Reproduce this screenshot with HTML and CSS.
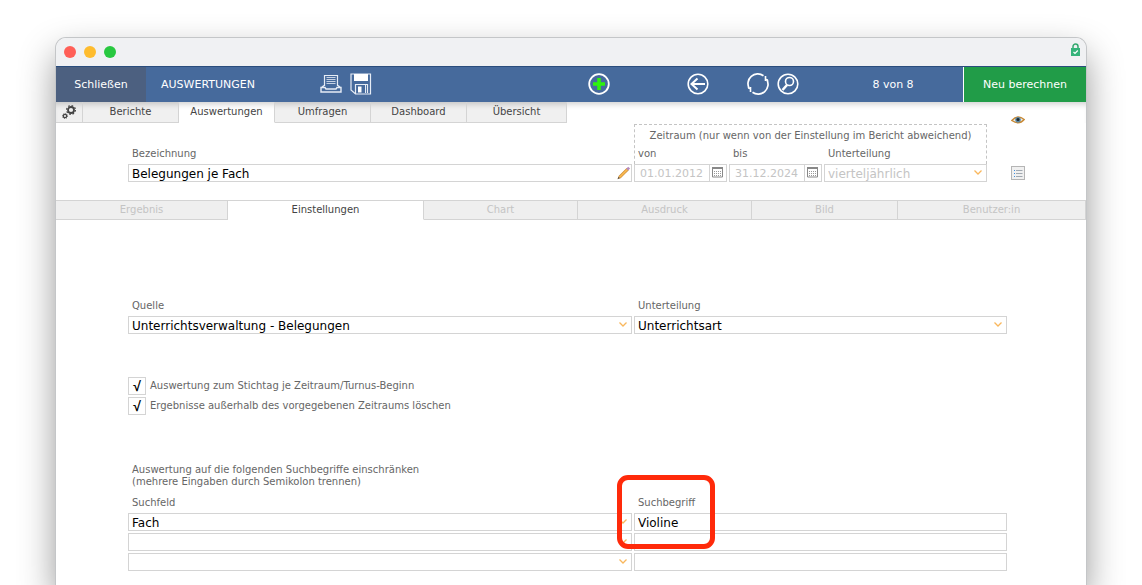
FILE: index.html
```html
<!DOCTYPE html>
<html lang="de">
<head>
  <meta charset="UTF-8">
  <meta name="viewport" content="width=device-width, initial-scale=1.0">
  <title>Auswertungen</title>
  <link rel="stylesheet" href="styles.css">
</head>
<body>
  <div class="window">
    <header class="titlebar">
      <span class="dot red"></span>
      <span class="dot yellow"></span>
      <span class="dot green"></span>
      <svg class="lock" width="9" height="13" viewBox="0 0 9 13">
        <path d="M2 6V3.500a2.500 2.500 0 0 1 5 0V6" fill="none" stroke="#35a86f" stroke-width="1.500"/>
        <rect y="5" width="9" height="8" fill="#35b37a"/>
        <path d="M2.500 9l1.500 1.500L6.800 7.500" fill="none" stroke="#fff" stroke-width="1.200"/>
      </svg>
    </header>

    <div class="toolbar">
      <button type="button" class="close">Schließen</button>
      <h1>AUSWERTUNGEN</h1>
      <div class="tools">
        <button type="button" aria-label="Drucken">
          <svg width="22" height="22" viewBox="0 0 22 22" fill="none" stroke="#e6ecf5">
            <path d="M4.500 13V2.500h13V13" stroke-width="1.200"/>
            <path d="M6.500 4.500h9M6.500 6.500h9M6.500 8.500h9M6.500 10.500h9" stroke-width=".8"/>
            <path d="M4 12.500L1.500 14.500M18 12.500l2.500 2M1 14.500h4l1 1.500h10l1-1.500h4v4.500H1z" stroke-width="1.400"/>
          </svg>
        </button>
        <button type="button" aria-label="Speichern">
          <svg width="22" height="22" viewBox="0 0 22 22" fill="none" stroke="#e6ecf5">
            <path d="M1 1h19.500v20H5.500L1 17z" stroke-width="1.200"/>
            <path d="M4 1h14v7H4z" fill="#fff" stroke="none"/>
            <path d="M5.500 21V11.500h12V20" stroke-width="1.200"/>
            <path d="M8 13.500h3.500v6H8z" fill="#fff" stroke="none"/>
            <path d="M15.500 12v8" stroke-width="1"/>
          </svg>
        </button>
      </div>
      <div class="tools">
        <button type="button" aria-label="Neu">
          <svg width="22" height="22" viewBox="0 0 22 22">
            <circle cx="11" cy="11" r="9.800" fill="none" stroke="#fff" stroke-width="1.800"/>
            <path d="M9.200 5h3.600v4.200H17v3.600h-4.200V17H9.200v-4.200H5V9.200h4.200z" fill="#2df20c"/>
          </svg>
        </button>
      </div>
      <div class="tools">
        <button type="button" aria-label="Zurück">
          <svg width="22" height="22" viewBox="0 0 22 22" fill="none" stroke="#fff">
            <circle cx="11" cy="11" r="9.800" stroke-width="1.600"/>
            <path d="M18 11H5M10.500 5.500L4.500 11l6 5.500" stroke-width="2"/>
          </svg>
        </button>
      </div>
      <div class="tools">
        <button type="button" aria-label="Aktualisieren">
          <svg width="22" height="22" viewBox="0 0 22 22" fill="none" stroke="#fff" stroke-width="1.700">
            <path d="M16.500 2.800A9.800 9.800 0 0 0 2.200 15.500M5.500 19.200A9.800 9.800 0 0 0 19.800 6.500"/>
            <path d="M3.500 19v-5M18.500 3v5" stroke-width="1.600"/>
            <path d="M.8 14.500L3.500 16M21.200 7.500L18.500 6" stroke-width="1.200"/>
          </svg>
        </button>
        <button type="button" aria-label="Suchen">
          <svg width="22" height="22" viewBox="0 0 22 22" fill="none" stroke="#fff">
            <circle cx="11" cy="11" r="9.800" stroke-width="1.600"/>
            <circle cx="12.500" cy="8.500" r="4" stroke-width="1.600"/>
            <path d="M10 12l-4.500 5" stroke-width="2.600"/>
          </svg>
        </button>
      </div>
      <span class="count">8 von 8</span>
      <button type="button" class="recalc">Neu berechnen</button>
    </div>

    <nav class="tabs">
      <a href="#" class="gear" aria-label="Optionen">
        <svg width="14" height="14" viewBox="0 0 14 14" fill="none" stroke="#444">
          <circle cx="9" cy="5" r="3" stroke-width="1.800"/>
          <circle cx="9" cy="5" r="4.400" stroke-width="1.200" stroke-dasharray="1.700 1.755"/>
          <circle cx="3" cy="11" r="1.700" stroke-width="1.300"/>
          <circle cx="3" cy="11" r="2.600" stroke-width=".8" stroke-dasharray="1 1.040"/>
        </svg>
      </a>
      <a href="#">Berichte</a>
      <a href="#" class="active">Auswertungen</a>
      <a href="#">Umfragen</a>
      <a href="#">Dashboard</a>
      <a href="#">Übersicht</a>
    </nav>

    <section class="head">
      <div class="name">
        <label for="bezeichnung">Bezeichnung</label>
        <div class="edit-field">
          <input type="text" id="bezeichnung" value="Belegungen je Fach">
          <svg width="14" height="14" viewBox="0 0 14 14">
            <path d="M2.500 11.500L11 3" stroke="#c98a35" stroke-width="3"/>
            <path d="M2.500 11.500L11 3" stroke="#f9b850" stroke-width="1.800"/>
            <path d="M10.500 3.500L12.500 1.500" stroke="#b58abf" stroke-width="2.800"/>
            <path d="M.5 13.500l1-2.800L3.300 12.500z" fill="#6b5230"/>
          </svg>
        </div>
      </div>
      <div class="period">
        <div class="period-box">
          <p>Zeitraum (nur wenn von der Einstellung im Bericht abweichend)</p>
          <div class="period-grid">
            <label for="von">von</label>
            <label for="bis">bis</label>
            <label for="teilung">Unterteilung</label>
          </div>
        </div>
        <div class="period-grid">
          <div class="date">
            <input type="text" id="von" value="01.01.2012" disabled>
            <button type="button" aria-label="Kalender von">
              <svg width="11" height="11" viewBox="0 0 11 11"><path d="M.5 .5h10v9.500H.5z" fill="#fff" stroke="#888"/><path d="M0 1h11" stroke="#888" stroke-width="2"/><path d="M2 4.500h8M2 6.500h8M2 8.500h8" stroke="#999" stroke-dasharray="1 1"/></svg>
            </button>
          </div>
          <div class="date">
            <input type="text" id="bis" value="31.12.2024" disabled>
            <button type="button" aria-label="Kalender bis">
              <svg width="11" height="11" viewBox="0 0 11 11"><path d="M.5 .5h10v9.500H.5z" fill="#fff" stroke="#888"/><path d="M0 1h11" stroke="#888" stroke-width="2"/><path d="M2 4.500h8M2 6.500h8M2 8.500h8" stroke="#999" stroke-dasharray="1 1"/></svg>
            </button>
          </div>
          <select id="teilung" disabled>
            <option>vierteljährlich</option>
          </select>
        </div>
      </div>
      <div class="side">
        <button type="button" aria-label="Ansicht">
          <svg width="14" height="10" viewBox="0 0 14 10">
            <path d="M.8 5.500Q6.500-1 13.200 4.500Q8 10.500 .8 5.500z" fill="#e9eef0" stroke="#c98a35" stroke-width="1.400"/>
            <circle cx="7" cy="4.800" r="2.800" fill="#5d88a3"/>
            <circle cx="7" cy="4.500" r="1.500" fill="#1c2830"/>
          </svg>
        </button>
        <button type="button" aria-label="Liste">
          <svg width="14" height="14" viewBox="0 0 14 14">
            <rect x=".5" y=".5" width="13" height="13" fill="#f0f0f0" stroke="#b5b5b5"/>
            <path d="M5 4.500h6.500M5 7.500h6.500M5 10.500h6.500" stroke="#a0a8b0"/>
            <path d="M3 4.500h1M3 7.500h1M3 10.500h1" stroke="#3d8fe0"/>
          </svg>
        </button>
      </div>
    </section>

    <nav class="subtabs">
      <a href="#">Ergebnis</a>
      <a href="#" class="active">Einstellungen</a>
      <a href="#">Chart</a>
      <a href="#">Ausdruck</a>
      <a href="#">Bild</a>
      <a href="#">Benutzer:in</a>
    </nav>

    <main class="settings">
      <div class="columns">
        <div class="field">
          <label for="quelle">Quelle</label>
          <select id="quelle"><option>Unterrichtsverwaltung - Belegungen</option></select>
        </div>
        <div class="field">
          <label for="unterteilung">Unterteilung</label>
          <select id="unterteilung"><option>Unterrichtsart</option></select>
        </div>
      </div>

      <div class="checks">
        <label><input type="checkbox" checked> Auswertung zum Stichtag je Zeitraum/Turnus-Beginn</label>
        <label><input type="checkbox" checked> Ergebnisse außerhalb des vorgegebenen Zeitraums löschen</label>
      </div>

      <p class="hint">Auswertung auf die folgenden Suchbegriffe einschränken<br>(mehrere Eingaben durch Semikolon trennen)</p>

      <div class="columns">
        <div class="field">
          <label for="feld1">Suchfeld</label>
          <select id="feld1"><option>Fach</option></select>
          <select aria-label="Suchfeld 2"><option></option></select>
          <select aria-label="Suchfeld 3"><option></option></select>
        </div>
        <div class="field marked">
          <label for="begriff1">Suchbegriff</label>
          <input type="text" id="begriff1" value="Violine">
          <input type="text" aria-label="Suchbegriff 2">
          <input type="text" aria-label="Suchbegriff 3">
          <span class="marker"></span>
        </div>
      </div>
    </main>
  </div>
</body>
</html>
```
FILE: styles.css
```css
* {
  box-sizing: border-box;
}
body {
  height: 100vh;
  margin: 0;
  padding: 38px 56px 0;
  overflow: hidden;
  background-color: #fff;
  font-family: Verdana, "DejaVu Sans", sans-serif;
  font-size: 10px;
  line-height: 12px;
  color: #666;
}
p, h1 {
  margin: 0;
}
a {
  color: inherit;
  text-decoration: none;
}
svg {
  display: block;
}
button {
  padding: 0;
  border: none;
  background: none;
  font: inherit;
  cursor: pointer;
}

/* window frame */
.window {
  min-height: 100%;
  background-color: #fff;
  border-radius: 10px 10px 0 0;
  box-shadow: 0 0 0 1px #c4c6c8, 0 16px 36px rgba(0, 0, 0, 0.42);
}
.titlebar {
  display: flex;
  align-items: center;
  gap: 8px;
  height: 28px;
  padding: 0 6px 0 8px;
  background-color: #f0f1f3;
  border-radius: 10px 10px 0 0;
}
.dot {
  width: 12px;
  height: 12px;
  border-radius: 50%;
}
.red {
  background-color: #ff5f57;
}
.yellow {
  background-color: #febc2e;
}
.green {
  background-color: #28c840;
}
.lock {
  margin: 0 0 6px auto;
}

/* toolbar */
.toolbar {
  display: grid;
  grid-template-columns: 90px 174fr 268fr 99fr 60fr 76fr 140fr 123px;
  align-items: center;
  height: 36px;
  background-color: #466a9c;
  border-top: 1px solid #2a4d7d;
  color: #fff;
  font-size: 11px;
}
.toolbar h1 {
  padding-left: 15px;
  font-size: 11px;
  font-weight: normal;
}
.close,
.recalc {
  height: 100%;
  color: #fff;
}
.close {
  background-color: #4c6080;
}
.recalc {
  background-color: #219c48;
  border-left: 1px solid #fff;
}
.tools {
  display: flex;
  gap: 8px;
  padding-bottom: 2px;
}
.count {
  text-align: center;
}

/* tabs */
.tabs {
  display: grid;
  grid-template-columns: 27px repeat(4, 96px) 100px;
  height: 21px;
  box-shadow: inset 0 6px 6px -4px rgba(0, 0, 0, 0.2);
  color: #444;
}
.tabs a,
.subtabs a {
  display: flex;
  align-items: center;
  justify-content: center;
  border-right: 1px solid #d4d4d4;
  border-bottom: 1px solid #d4d4d4;
}
.tabs a {
  background-color: rgba(0, 0, 0, 0.06);
}
.subtabs a {
  background-color: #efefef;
}
.tabs .active,
.subtabs .active {
  background-color: transparent;
  border-bottom-color: transparent;
  color: #444;
}
.subtabs {
  display: grid;
  grid-template-columns: 172fr 196fr 154fr 174fr 146fr 188fr;
  height: 20px;
  border-top: 1px solid #d4d4d4;
  color: #c4c4c4;
}

/* inputs */
label {
  padding-left: 4px;
}
input[type="text"],
select {
  width: 100%;
  height: 18px;
  margin: 0;
  padding: 1px 3px 0;
  border: 1px solid #d4d4d4;
  border-radius: 0;
  background-color: #fff;
  color: #000;
  font: 12px Verdana, "DejaVu Sans", sans-serif;
}
select {
  appearance: none;
  background-image: url("data:image/svg+xml,%3Csvg xmlns='http://www.w3.org/2000/svg' width='8' height='5'%3E%3Cpath d='M.5 .5L4 4L7.500 .5' fill='none' stroke='%23f9b75c' stroke-width='1.300'/%3E%3C/svg%3E");
  background-repeat: no-repeat;
  background-position: right 4px top 5px;
}
input:disabled,
select:disabled {
  color: #c4c4c4;
  opacity: 1;
}

/* name and period */
.head {
  display: grid;
  grid-template-columns: 504fr 353fr 36px;
  gap: 2px;
  padding: 1px 61px 18px 72px;
}
.name {
  display: flex;
  flex-direction: column;
  justify-content: flex-end;
  gap: 4px;
}
.edit-field {
  display: flex;
  align-items: center;
  border: 1px solid #d4d4d4;
}
.edit-field input[type="text"] {
  height: 16px;
  border: none;
}
.period-box {
  height: 40px;
  padding-top: 5px;
  border: 1px dashed #c4c4c4;
  border-bottom: none;
}
.period-box p {
  margin-bottom: 6px;
  text-align: center;
}
.period-box .period-grid {
  margin: 0 -1px;
}
.period-grid {
  display: grid;
  grid-template-columns: 93fr 93fr 163fr;
  gap: 2px;
}
.date {
  display: flex;
  border: 1px solid #d4d4d4;
}
.date input[type="text"] {
  flex: 1;
  min-width: 0;
  height: 16px;
  padding: 1px 0 0 5px;
  border: none;
  border-right: 1px solid #d4d4d4;
  font-size: 11px;
}
.date button {
  padding: 0 3px 2px 2px;
}
.side {
  display: flex;
  flex-direction: column;
  align-items: flex-end;
  justify-content: space-between;
  margin-top: -9px;
  padding-bottom: 2px;
}

/* settings */
.settings {
  padding: 80px 79px 0 72px;
}
.columns {
  display: grid;
  grid-template-columns: 504fr 373fr;
  gap: 2px;
}
.field {
  display: flex;
  flex-direction: column;
  gap: 2px;
}
.field label {
  margin-bottom: 2px;
}
.checks {
  display: flex;
  flex-direction: column;
  gap: 2px;
  margin: 43px 0 49px;
}
.checks label {
  display: flex;
  align-items: center;
  gap: 4px;
  padding: 0;
}
.checks input {
  display: grid;
  place-items: center;
  appearance: none;
  width: 18px;
  height: 18px;
  margin: 0;
  border: 1px solid #d4d4d4;
}
.checks input:checked::before {
  content: "√";
  color: #000;
  font-size: 14px;
  font-weight: bold;
}
.hint {
  margin-bottom: 9px;
  padding-left: 4px;
}
.marked {
  position: relative;
}
.marker {
  position: absolute;
  top: -22px;
  left: -17px;
  width: 98px;
  height: 74px;
  border: 5px solid #ff2a0a;
  border-radius: 11px;
  pointer-events: none;
}
```
